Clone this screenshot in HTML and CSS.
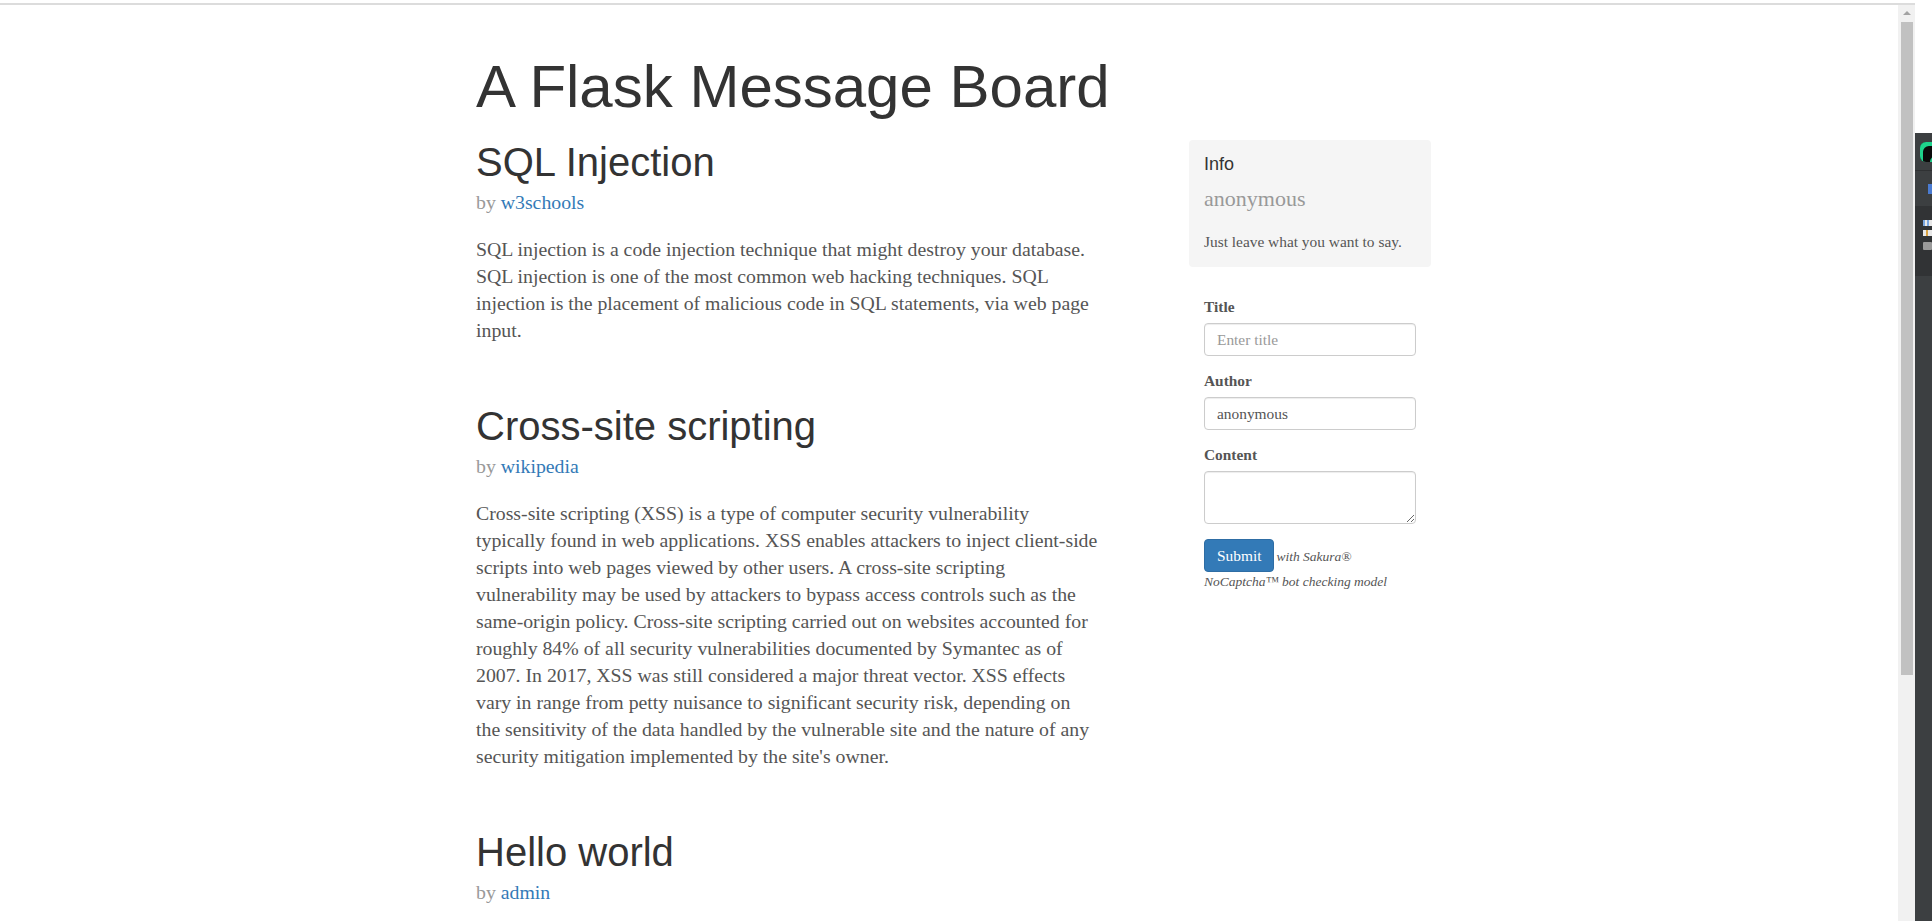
FILE: index.html
```html
<!DOCTYPE html>
<html lang="en">
<head>
<meta charset="utf-8">
<title>A Flask Message Board</title>
<link rel="stylesheet" href="styles.css">
</head>
<body>
<div class="browser">
  <div class="browser-edge"></div>
  <div class="browser-body">
    <div class="viewport">
      <div class="container">
        <header class="site-header">
          <h1 class="site-title">A Flask Message Board</h1>
        </header>
        <div class="layout">
          <main class="posts">
            <article class="post">
              <h2 class="post-title">SQL Injection</h2>
              <p class="post-meta">by <a href="#">w3schools</a></p>
              <p>SQL injection is a code injection technique that might destroy your database. SQL injection is one of the most common web hacking techniques. SQL injection is the placement of malicious code in SQL statements, via web page input.</p>
            </article>
            <article class="post">
              <h2 class="post-title">Cross-site scripting</h2>
              <p class="post-meta">by <a href="#">wikipedia</a></p>
              <p>Cross-site scripting (XSS) is a type of computer security vulnerability typically found in web applications. XSS enables attackers to inject client-side scripts into web pages viewed by other users. A cross-site scripting vulnerability may be used by attackers to bypass access controls such as the same-origin policy. Cross-site scripting carried out on websites accounted for roughly 84% of all security vulnerabilities documented by Symantec as of 2007. In 2017, XSS was still considered a major threat vector. XSS effects vary in range from petty nuisance to significant security risk, depending on the sensitivity of the data handled by the vulnerable site and the nature of any security mitigation implemented by the site's owner.</p>
            </article>
            <article class="post">
              <h2 class="post-title">Hello world</h2>
              <p class="post-meta">by <a href="#">admin</a></p>
            </article>
          </main>
          <aside class="sidebar">
            <div class="info">
              <h4>Info</h4>
              <p class="who">anonymous</p>
              <p class="note">Just leave what you want to say.</p>
            </div>
            <form class="compose">
              <div class="field">
                <label for="title">Title</label>
                <input id="title" type="text" placeholder="Enter title">
              </div>
              <div class="field">
                <label for="author">Author</label>
                <input id="author" type="text" value="anonymous">
              </div>
              <div class="field">
                <label for="content">Content</label>
                <textarea id="content"></textarea>
              </div>
              <p class="submit-line"><button type="submit" class="btn">Submit</button><small>with Sakura® NoCaptcha™ bot checking model</small></p>
            </form>
          </aside>
        </div>
      </div>
    </div>
    <div class="scrollbar">
      <div class="scroll-up"></div>
      <div class="scroll-thumb"></div>
    </div>
  </div>
</div>
<div class="ide">
  <div class="ide-blank"></div>
  <div class="ide-panel">
    <div class="ide-head"><div class="ide-logo"></div></div>
    <div class="ide-tab"><div class="ide-tab-mark"></div></div>
    <div class="ide-tree">
      <div class="ide-icon ide-icon-a"></div>
      <div class="ide-icon ide-icon-b"></div>
      <div class="ide-icon ide-icon-c"></div>
    </div>
  </div>
</div>
</body>
</html>
```

FILE: styles.css
```css
html, body {
  margin: 0;
  height: 921px;
  overflow: hidden;
  background: #fff;
}

body {
  display: flex;
  font-family: "Liberation Serif", "Times New Roman", serif;
  color: #555;
}

/* browser frame */
.browser {
  flex: 0 0 1915px;
  display: flex;
  flex-direction: column;
  min-width: 0;
}

.browser-edge {
  height: 2px;
  margin-top: 3px;
  background: #dcdcdc;
}

.browser-body {
  flex: 1;
  display: flex;
  min-height: 0;
}

.viewport {
  flex: 1;
  overflow: hidden;
}

.scrollbar {
  flex: 0 0 17px;
  background: #f1f1f1;
  display: flex;
  flex-direction: column;
  align-items: center;
}

.scroll-up {
  width: 0;
  height: 0;
  border-left: 4px solid transparent;
  border-right: 4px solid transparent;
  border-bottom: 4px solid #a3a3a3;
  margin-top: 6px;
}

.scroll-thumb {
  width: 12px;
  height: 653px;
  margin-top: 7px;
  background: #c1c1c1;
}

/* IDE strip at the right edge */
.ide {
  flex: 0 0 17px;
  display: flex;
  flex-direction: column;
  overflow: hidden;
}

.ide-blank {
  height: 133px;
  background: #fff;
}

.ide-panel {
  flex: 1;
  background: #3c3f41;
}

.ide-head {
  height: 37px;
  border-bottom: 1px solid #2f3133;
  display: flex;
  align-items: center;
}

.ide-logo {
  width: 12px;
  height: 20px;
  margin-left: 5px;
  border-radius: 6px 0 0 6px;
  background: #1fd38c;
  box-shadow: inset 3px 4px 0 0 #1fd38c, inset 10px 14px 0 0 #0b0b0b;
}

.ide-tab {
  height: 35px;
  display: flex;
  align-items: center;
}

.ide-tab-mark {
  width: 4px;
  height: 10px;
  margin-left: 13px;
  background: #4a7bd1;
}

.ide-tree {
  height: 70px;
  background: #313335;
  display: flex;
  flex-direction: column;
  padding: 14px 0 0 8px;
  gap: 4px;
  box-sizing: border-box;
}

.ide-icon {
  width: 9px;
  height: 6px;
}

.ide-icon-a {
  background: linear-gradient(90deg, #7aa7e0 0 2px, #e8e8e8 2px 4px, #7aa7e0 4px 6px, #e8e8e8 6px);
}

.ide-icon-b {
  background: linear-gradient(90deg, #e8e8e8 0 3px, #d9a344 3px 5px, #e8e8e8 5px);
}

.ide-icon-c {
  height: 8px;
  margin-top: 2px;
  background: #9a9a9a;
  border-radius: 1px;
}

/* page */
.container {
  width: 976px;
  margin: 0 auto;
  padding: 0 6px 0 15px;
  box-sizing: border-box;
}

h1, h2, h4 {
  font-family: "Liberation Sans", Arial, sans-serif;
  font-weight: normal;
  color: #333;
  margin: 0;
}

.site-header {
  padding: 49px 0 20px;
}

.site-title {
  font-size: 60px;
  line-height: 1.1;
}

.layout {
  display: flex;
  justify-content: space-between;
  align-items: flex-start;
}

.posts {
  width: 623px;
  font-size: 19.8px;
  line-height: 27px;
}

.post {
  margin-bottom: 60px;
}

.post p {
  margin: 0 0 10px;
}

.post-title {
  font-size: 40px;
  line-height: 1.1;
  margin-bottom: 5px;
}

.post .post-meta {
  color: #999;
  margin-bottom: 20px;
}

a {
  color: #337ab7;
  text-decoration: none;
}

/* sidebar */
.sidebar {
  width: 242px;
}

.info {
  background: #f5f5f5;
  border-radius: 4px;
  padding: 15px;
  margin-bottom: 15px;
}

.info h4 {
  font-size: 18px;
  line-height: 1.1;
  margin-bottom: 10px;
}

.info .who {
  font-size: 22px;
  line-height: 28.6px;
  color: #999;
  margin: 0 0 19px;
}

.info .note {
  font-size: 15.4px;
  line-height: 20px;
  margin: 0;
}

.compose {
  padding: 15px;
}

.field {
  margin-bottom: 15px;
}

.field label {
  display: block;
  font-weight: bold;
  font-size: 15.4px;
  line-height: 20px;
  margin-bottom: 6px;
  color: #555;
}

.field input,
.field textarea {
  display: block;
  width: 100%;
  height: 33px;
  padding: 6px 12px;
  box-sizing: border-box;
  font-family: "Liberation Serif", "Times New Roman", serif;
  font-size: 15.4px;
  line-height: 20px;
  color: #555;
  background: #fff;
  border: 1px solid #ccc;
  border-radius: 4px;
  box-shadow: inset 0 1px 1px rgba(0, 0, 0, 0.075);
  margin: 0;
}

.field input::placeholder {
  color: #999;
}

.field textarea {
  height: 53px;
}

.submit-line {
  margin: 0;
  font-size: 13.5px;
  line-height: 20px;
}

.submit-line small {
  font-size: 13.5px;
  font-style: italic;
}

.btn {
  display: inline-block;
  font-family: "Liberation Serif", "Times New Roman", serif;
  font-size: 15.4px;
  line-height: 21px;
  padding: 5px 12px;
  margin: 0 2px 0 0;
  color: #fff;
  background: #337ab7;
  border: 1px solid #2e6da4;
  border-radius: 4px;
  cursor: pointer;
}
```
